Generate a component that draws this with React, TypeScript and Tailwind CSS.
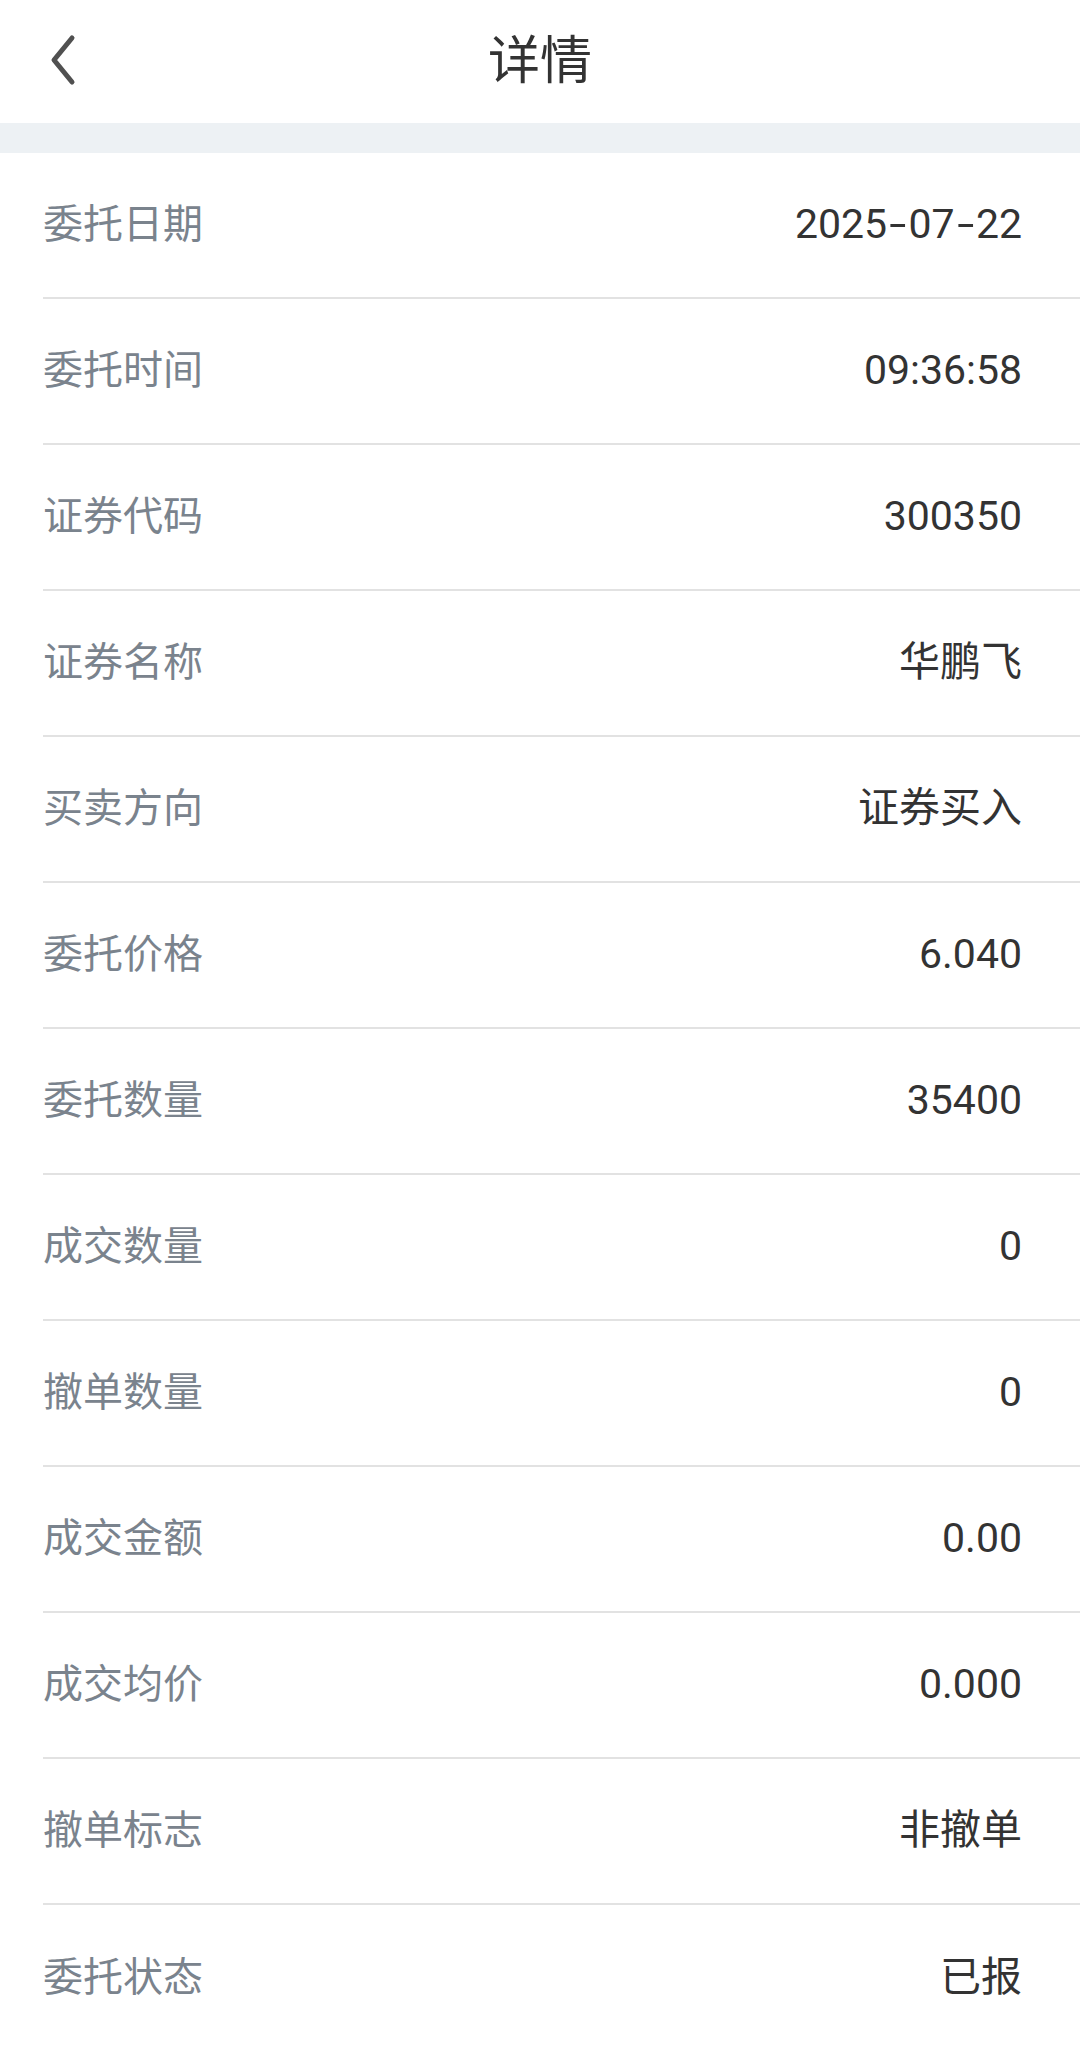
import React from "react";

const rows: [string, string][] = [
  ["委托日期", "2025-07-22"],
  ["委托时间", "09:36:58"],
  ["证券代码", "300350"],
  ["证券名称", "华鹏飞"],
  ["买卖方向", "证券买入"],
  ["委托价格", "6.040"],
  ["委托数量", "35400"],
  ["成交数量", "0"],
  ["撤单数量", "0"],
  ["成交金额", "0.00"],
  ["成交均价", "0.000"],
  ["撤单标志", "非撤单"],
  ["委托状态", "已报"],
];

function Value({ v }: { v: string }) {
  const parts = v.split("-");
  return (
    <span className="text-[41px] text-[#333333]">
      {parts.map((p, i) => (
        <React.Fragment key={i}>
          {i > 0 && (
            <span className="inline-block mx-[5px] scale-x-150">-</span>
          )}
          {p}
        </React.Fragment>
      ))}
    </span>
  );
}

export default function App() {
  return (
    <div
      className="w-[1080px] min-h-[2047px] bg-white"
      style={{ fontFamily: "Roboto, 'Noto Sans CJK SC', sans-serif" }}
    >
      <div className="relative h-[123px] flex items-center justify-center bg-white">
        <svg
          className="absolute left-[44px] top-[34px]"
          width="36"
          height="52"
          viewBox="0 0 36 52"
          fill="none"
        >
          <path
            d="M28 4 L10 26 L28 48"
            stroke="#505050"
            strokeWidth="5"
            strokeLinecap="round"
            strokeLinejoin="round"
          />
        </svg>
        <span className="text-[52px] text-[#333333] leading-none">详情</span>
      </div>
      <div className="h-[30px] bg-[#edf1f4]" />
      <div className="pl-[43px]">
        {rows.map(([k, v], i) => (
          <div
            key={k}
            className={
              "h-[146px] flex items-center justify-between pr-[58px] " +
              (i < rows.length - 1 ? "border-b-2 border-[#e2e2e2]" : "")
            }
          >
            <span className="text-[40px] text-[#7a838d]">{k}</span>
            <Value v={v} />
          </div>
        ))}
      </div>
    </div>
  );
}
